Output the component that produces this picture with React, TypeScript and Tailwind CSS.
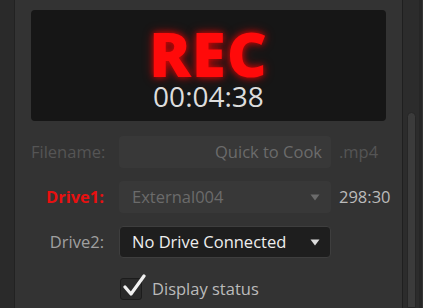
import React from 'react'

function Caret({ className }: { className: string }) {
  return (
    <svg width="10" height="7" viewBox="0 0 10 7" className={className}>
      <path d="M0.5 0.5 H9.5 L5 6.5 Z" fill="currentColor" />
    </svg>
  )
}

export default function App() {
  const font = { fontFamily: '"Open Sans", "Liberation Sans", sans-serif' }
  return (
    <div className="flex h-[308px] w-[423px] overflow-hidden bg-[#333333]" style={font}>
      {/* left strip */}
      <div className="w-[15px] shrink-0 border-r border-[#222222] bg-[#2a2a2a]" />

      {/* main panel */}
      <div className="flex w-[387px] shrink-0 flex-col bg-[#333333] px-[16px] pt-[10px]">
        <div className="flex h-[111px] flex-col items-center rounded-[4px] bg-[#161616] pt-[19px]">
          <div
            className="text-[62px] font-extrabold leading-[48px] tracking-[1px] text-[#ff0a0a]"
            style={{ textShadow: '0 0 6px rgba(255,0,0,0.75), 0 0 12px rgba(255,0,0,0.45)' }}
          >
            REC
          </div>
          <div className="mt-[5px] text-[28px] leading-[28px] text-[#dddddd]">00:04:38</div>
        </div>

        <div className="mt-[15px] grid grid-cols-[73px_212px_auto] items-center gap-x-[15px] gap-y-[13px] text-[16.5px]">
          <div className="text-right text-[#555555]">Filename:</div>
          <div className="flex h-[32px] w-[212px] items-center justify-end rounded-[4px] bg-[#383838] pr-[9px] text-[#6b6b6b]">
            Quick to Cook
          </div>
          <div className="ml-[-7px] text-[#555555]">.mp4</div>

          <div className="text-right font-bold text-[#e81010]">Drive1:</div>
          <div className="flex h-[32px] w-[212px] items-center justify-between rounded-[4px] bg-[#383838] pl-[13px] pr-[11px] text-[#6b6b6b]">
            <span>External004</span>
            <Caret className="text-[#6b6b6b]" />
          </div>
          <div className="ml-[-7px] text-[#bbbbbb]">298:30</div>

          <div className="text-right text-[#a0a0a0]">Drive2:</div>
          <div className="flex h-[32px] w-[212px] items-center justify-between rounded-[4px] border border-[#3e3e3e] bg-[#1e1e1e] pl-[12px] pr-[10px] text-[#eeeeee]">
            <span>No Drive Connected</span>
            <Caret className="text-[#dddddd]" />
          </div>
          <div />

          <div />
          <div className="mt-[6px] flex items-center gap-[10px] pl-[1px]">
            <div className="relative h-[22px] w-[22px] rounded-[3px] border border-[#1c1c1c] bg-[#2a2a2a]">
              <svg width="26" height="24" viewBox="0 0 26 24" className="absolute left-[1px] top-[-5px]">
                <path d="M3 13 L9 20 L22 2" fill="none" stroke="#f0f0f0" strokeWidth="3.2" strokeLinecap="round" strokeLinejoin="round" />
              </svg>
            </div>
            <span className="text-[#bbbbbb]">Display status</span>
          </div>
          <div />
        </div>
      </div>

      {/* scrollbar */}
      <div className="flex w-[17px] shrink-0 justify-center border-l border-[#1f1f1f] bg-[#2c2c2c] pt-[112px]">
        <div className="w-[9px] rounded-t-[5px] border border-[#262626] bg-[#3b3b3b]" />
      </div>
      <div className="w-[3px] shrink-0 bg-[#262626]" />
    </div>
  )
}
